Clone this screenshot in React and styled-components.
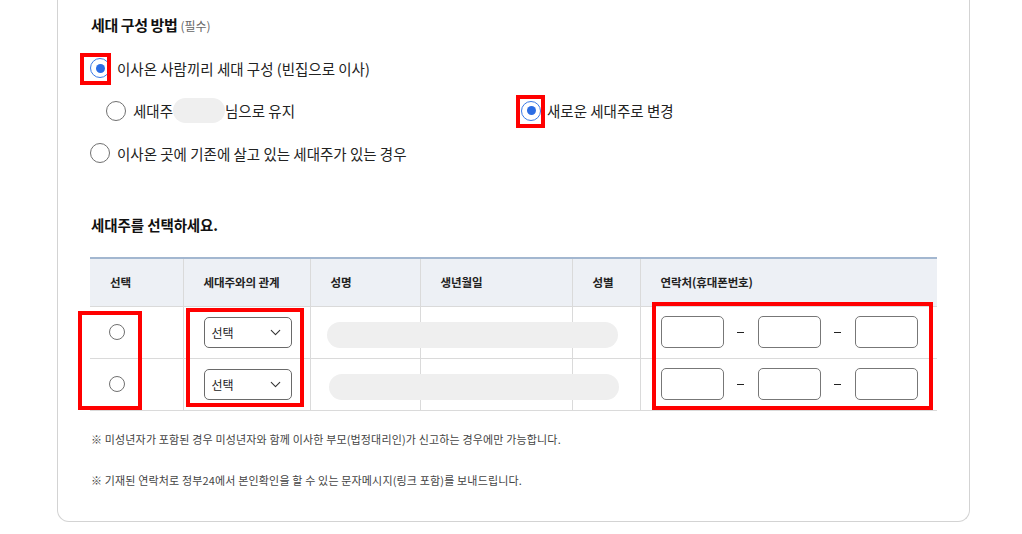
import React from "react";
import styled, { createGlobalStyle, css } from "styled-components";
import { ChevronDown } from "lucide-react";

const Global = createGlobalStyle`
  html, body { margin: 0; padding: 0; background: #fff; }
  body {
    font-family: "Noto Sans CJK KR", "Noto Sans", sans-serif;
    color: #222;
  }
  * { box-sizing: border-box; }
`;

const Page = styled.div`
  padding-left: 57px;
  width: 1022px;
`;

const Card = styled.section`
  width: 913px;
  border: 1px solid #d3d3d3;
  border-top: none;
  border-radius: 0 0 12px 12px;
  padding: 15px 32px 32px 32px;
  background: #fff;
`;

const Title = styled.h3`
  margin: 0 0 0 1px;
  font-size: 15px;
  line-height: 20px;
  font-weight: 700;
  letter-spacing: -0.4px;
  color: #111;
`;

const Sub = styled.span`
  font-size: 12px;
  font-weight: 400;
  color: #666;
  letter-spacing: 0;
`;

const OptionList = styled.div`
  margin-top: 22px;
  display: flex;
  flex-direction: column;
  gap: 22.5px;
`;

const SubGrid = styled.div`
  display: grid;
  grid-template-columns: 415px 1fr;
  padding-left: 16px;
`;

const Option = styled.label`
  display: flex;
  align-items: center;
  gap: ${(p) => p.$gap ?? 7}px;
  height: 20px;
  font-size: 14.5px;
  letter-spacing: 0;
  color: #222;
`;

const OptionText = styled.span`
  display: inline-flex;
  align-items: center;
  white-space: nowrap;
`;

const RadioMark = styled.span`
  position: relative;
  flex: none;
  width: ${(p) => p.$size}px;
  height: ${(p) => p.$size}px;
  border-radius: 50%;
  border: 1px solid ${(p) => (p.$checked ? "#3a7ae6" : "#707070")};
  background: #fff;
  display: flex;
  align-items: center;
  justify-content: center;
  &::before {
    content: "";
    width: ${(p) => (p.$checked ? 9 : 0)}px;
    height: ${(p) => (p.$checked ? 9 : 0)}px;
    border-radius: 50%;
    background: #2b6de4;
  }
  ${(p) =>
    p.$box &&
    css`
      &::after {
        content: "";
        position: absolute;
        inset: ${p.$box};
        border: 4px solid #ff0000;
      }
    `}
`;

const Redact = styled.span`
  display: inline-block;
  width: ${(p) => p.$w}px;
  height: 25px;
  border-radius: 13px;
  background: #efefef;
`;

const SubTitle = styled.h4`
  margin: 52px 0 0 1px;
  font-size: 14.5px;
  line-height: 20px;
  font-weight: 700;
  letter-spacing: -0.1px;
  color: #111;
`;

const TableWrap = styled.div`
  position: relative;
  margin-top: 22px;
`;

const Table = styled.table`
  width: 847px;
  border-collapse: collapse;
  table-layout: fixed;
  border-top: 2px solid #a3b7d0;
`;

const Th = styled.th`
  height: 48px;
  padding: 0 0 0 20px;
  text-align: left;
  font-size: 11.5px;
  font-weight: 700;
  letter-spacing: -0.1px;
  color: #222;
  background: #edf0f5;
  border-bottom: 1px solid #dadada;
  border-left: 1px solid #dadada;
  &:first-child { border-left: none; }
`;

const Td = styled.td`
  height: 52px;
  padding: 0 0 0 ${(p) => p.$pad ?? 20}px;
  border-bottom: 1px solid #dadada;
  border-left: 1px solid #dadada;
  vertical-align: middle;
  &:first-child { border-left: none; }
`;

const Select = styled.div`
  width: 88px;
  height: 31px;
  border: 1px solid #6a6a6a;
  border-radius: 5px;
  display: flex;
  align-items: center;
  justify-content: space-between;
  padding: 0 7px 0 7px;
  font-size: 12px;
  color: #222;
  background: #fff;
`;

const PhoneRow = styled.div`
  display: flex;
  align-items: center;
`;

const PhoneInput = styled.input`
  width: 63px;
  height: 32px;
  border: 1px solid #777;
  border-radius: 5px;
  background: #fff;
  padding: 0 6px;
  outline: none;
`;

const Dash = styled.span`
  width: 34px;
  display: flex;
  justify-content: center;
  &::before {
    content: "";
    width: 7px;
    height: 1px;
    background: #222;
  }
`;

const Overlay = styled.div`
  position: absolute;
  pointer-events: none;
`;

const Annot = styled(Overlay)`
  border: 4px solid #ff0000;
`;

const NamePill = styled(Overlay)`
  height: 26px;
  border-radius: 13px;
  background: #efefef;
`;

const Notes = styled.div`
  margin-top: 19px;
  display: flex;
  flex-direction: column;
  gap: 23px;
`;

const Note = styled.p`
  margin: 0 0 0 1px;
  font-size: 11px;
  line-height: 18px;
  letter-spacing: 0.16px;
  color: #444;
`;

const cols = [93, 127, 110, 152, 68, 297];
const heads = ["선택", "세대주와의 관계", "성명", "생년월일", "성별", "연락처(휴대폰번호)"];

function Row() {
  return (
    <tr>
      <Td $pad={19}>
        <RadioMark $size={16} />
      </Td>
      <Td>
        <Select>
          <span>선택</span>
          <ChevronDown size={17} strokeWidth={1.5} color="#333" />
        </Select>
      </Td>
      <Td />
      <Td />
      <Td />
      <Td>
        <PhoneRow>
          <PhoneInput />
          <Dash />
          <PhoneInput />
          <Dash />
          <PhoneInput />
        </PhoneRow>
      </Td>
    </tr>
  );
}

export default function App() {
  return (
    <Page>
      <Global />
      <Card>
        <Title>
          세대 구성 방법 <Sub>(필수)</Sub>
        </Title>
        <OptionList>
          <Option>
            <RadioMark $size={20} $checked $box="-6px -2px -8px -11px" />
            이사온 사람끼리 세대 구성 (빈집으로 이사)
          </Option>
          <SubGrid>
            <Option>
              <RadioMark $size={20} />
              <OptionText>
                세대주
                <Redact $w={52} />
                님으로 유지
              </OptionText>
            </Option>
            <Option $gap={6}>
              <RadioMark $size={20} $checked $box="-7px -5px -8px -6px" />
              새로운 세대주로 변경
            </Option>
          </SubGrid>
          <Option>
            <RadioMark $size={20} />
            이사온 곳에 기존에 살고 있는 세대주가 있는 경우
          </Option>
        </OptionList>

        <SubTitle>세대주를 선택하세요.</SubTitle>

        <TableWrap>
          <Table>
            <colgroup>
              {cols.map((w, i) => (
                <col key={i} style={{ width: w }} />
              ))}
            </colgroup>
            <thead>
              <tr>
                {heads.map((h) => (
                  <Th key={h}>{h}</Th>
                ))}
              </tr>
            </thead>
            <tbody>
              <Row />
              <Row />
            </tbody>
          </Table>
          <NamePill style={{ left: 237, top: 65, width: 291 }} />
          <NamePill style={{ left: 239, top: 117, width: 290 }} />
          <Annot style={{ left: -12, top: 54, width: 64, height: 99 }} />
          <Annot style={{ left: 96, top: 51, width: 118, height: 99 }} />
          <Annot style={{ left: 562, top: 45, width: 281, height: 108 }} />
        </TableWrap>

        <Notes>
          <Note>※ 미성년자가 포함된 경우 미성년자와 함께 이사한 부모(법정대리인)가 신고하는 경우에만 가능합니다.</Note>
          <Note>※ 기재된 연락처로 정부24에서 본인확인을 할 수 있는 문자메시지(링크 포함)를 보내드립니다.</Note>
        </Notes>
      </Card>
    </Page>
  );
}
